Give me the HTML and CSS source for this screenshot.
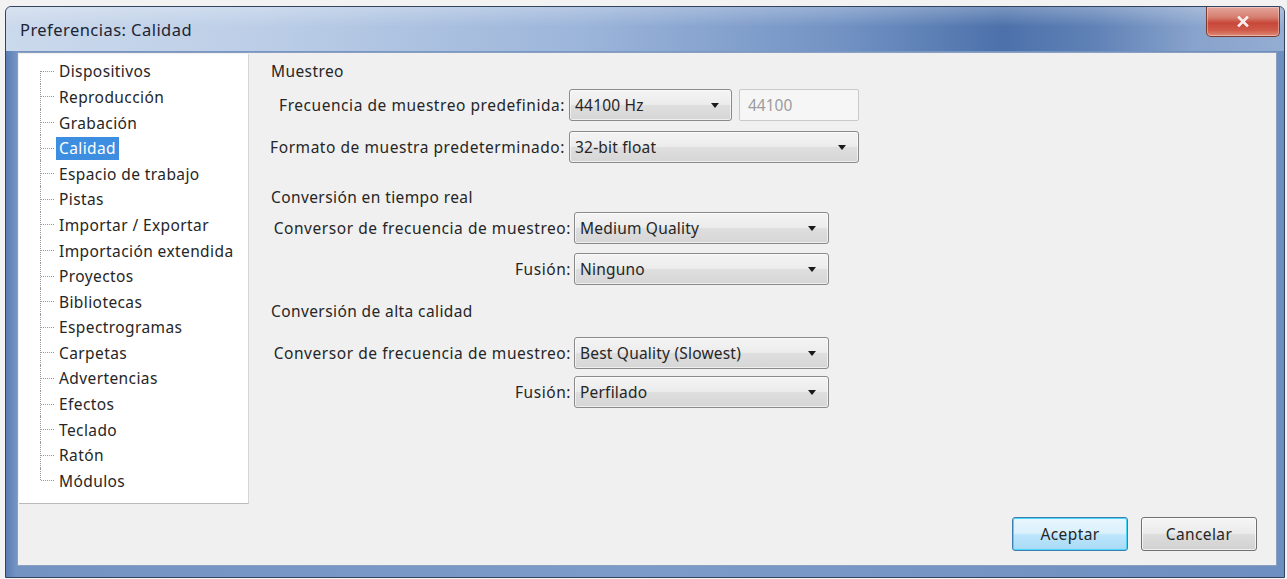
FILE: index.html
```html
<!DOCTYPE html>
<html lang="es">
<head>
<meta charset="utf-8">
<title>Preferencias: Calidad</title>
<link rel="stylesheet" href="styles.css">
</head>
<body>
<div class="window">
  <div class="titlebar">
    <span class="title">Preferencias: Calidad</span>
    <button class="close" type="button" aria-label="Cerrar">
      <svg width="12" height="11" viewBox="0 0 12 11"><path d="M2 1.5 L10 9.5 M10 1.5 L2 9.5" stroke="#fbeeee" stroke-width="2.6" stroke-linecap="square"/></svg>
    </button>
  </div>
  <div class="client">
    <div class="main">
      <ul class="tree">
        <li><span>Dispositivos</span></li>
        <li><span>Reproducción</span></li>
        <li><span>Grabación</span></li>
        <li class="selected"><span>Calidad</span></li>
        <li><span>Espacio de trabajo</span></li>
        <li><span>Pistas</span></li>
        <li><span>Importar / Exportar</span></li>
        <li><span>Importación extendida</span></li>
        <li><span>Proyectos</span></li>
        <li><span>Bibliotecas</span></li>
        <li><span>Espectrogramas</span></li>
        <li><span>Carpetas</span></li>
        <li><span>Advertencias</span></li>
        <li><span>Efectos</span></li>
        <li><span>Teclado</span></li>
        <li><span>Ratón</span></li>
        <li><span>Módulos</span></li>
      </ul>
      <div class="panel">
        <div class="heading h-sample">Muestreo</div>
        <div class="form form-sample">
          <label>Frecuencia de muestreo predefinida:</label>
          <div class="combo combo-rate"><span>44100 Hz</span><i class="arrow"></i></div>
          <div class="field">44100</div>
          <label>Formato de muestra predeterminado:</label>
          <div class="combo combo-wide"><span>32-bit float</span><i class="arrow"></i></div>
        </div>

        <div class="heading h-realtime">Conversión en tiempo real</div>
        <div class="form form-realtime">
          <label>Conversor de frecuencia de muestreo:</label>
          <div class="combo"><span>Medium Quality</span><i class="arrow"></i></div>
          <label>Fusión:</label>
          <div class="combo"><span>Ninguno</span><i class="arrow"></i></div>
        </div>

        <div class="heading h-high">Conversión de alta calidad</div>
        <div class="form form-high">
          <label>Conversor de frecuencia de muestreo:</label>
          <div class="combo"><span>Best Quality (Slowest)</span><i class="arrow"></i></div>
          <label>Fusión:</label>
          <div class="combo"><span>Perfilado</span><i class="arrow"></i></div>
        </div>
      </div>
    </div>
    <div class="buttons">
      <button class="btn default" type="button">Aceptar</button>
      <button class="btn" type="button">Cancelar</button>
    </div>
  </div>
</div>
</body>
</html>
```

FILE: styles.css
```css
* {
  box-sizing: border-box;
}

html, body {
  margin: 0;
  padding: 0;
}

body {
  width: 1287px;
  height: 579px;
  overflow: hidden;
  background: #f2f2f2;
  font-family: "Noto Sans", "Open Sans", sans-serif;
  font-size: 15.5px;
  letter-spacing: 0.4px;
  color: #262626;
}

/* Aero-style window frame */
.window {
  margin: 6px 0 0 5px;
  width: 1280px;
  height: 572px;
  display: flex;
  flex-direction: column;
  border: 1px solid #33445e;
  border-radius: 6px 6px 0 0;
  background:
    linear-gradient(to right, #5a7db4 0px, #7393c3 10px, #7d9bc8 50%, #6d8ec0 100%);
  padding: 0 7px 11px 11px;
}

.titlebar {
  height: 44px;
  margin: 0 -7px 0 -11px;
  padding-left: 14px;
  padding-right: 4px;
  display: flex;
  justify-content: space-between;
  align-items: flex-start;
  border-radius: 5px 5px 0 0;
  background:
    linear-gradient(to bottom, rgba(255,255,255,0.25) 0%, rgba(255,255,255,0) 45%),
    linear-gradient(to right, #cbd9ec 0%, #bccee7 20%, #9cb5da 45%, #7393c4 65%, #4c71aa 78%, #5f81b6 85%, #88a3cc 93%, #93acd2 100%);
}

.title {
  align-self: center;
  font-size: 16.5px;
  letter-spacing: 0.45px;
  color: #1c2433;
}

.close {
  width: 74px;
  height: 30px;
  margin: 0;
  padding: 0;
  border: 1px solid #7a3a30;
  border-top: none;
  border-radius: 0 0 5px 5px;
  background: linear-gradient(to bottom, #e3a59a 0%, #d57f70 35%, #c8483a 55%, #cf5a48 80%, #de8a78 100%);
  display: flex;
  align-items: center;
  justify-content: center;
  box-shadow: inset 0 0 0 1px rgba(255,255,255,0.35);
}

/* Client area */
.client {
  flex: 1;
  display: flex;
  flex-direction: column;
  background: #f0f0f0;
  border: 1px solid #8aa0be;
  margin-top: 1px;
}

.main {
  display: flex;
  padding: 1px 0 0 1px;
  height: 451px;
}

/* Category tree */
.tree {
  list-style: none;
  margin: 0;
  padding: 4px 0 0 0;
  width: 230px;
  height: 450px;
  background: #ffffff;
  border-right: 1px solid #d5d5d5;
  border-bottom: 1px solid #b9b9b9;
}

.tree li {
  position: relative;
  height: 25.6px;
  line-height: 25.6px;
  padding-left: 37px;
  white-space: nowrap;
}

.tree li::before {
  content: "";
  position: absolute;
  left: 21px;
  top: 0;
  height: 100%;
  border-left: 1px dotted #9a9a9a;
}

.tree li:first-child::before {
  top: 50%;
  height: 50%;
}

.tree li:last-child::before {
  height: 50%;
}

.tree li::after {
  content: "";
  position: absolute;
  left: 22px;
  top: 50%;
  width: 13px;
  border-top: 1px dotted #9a9a9a;
}

.tree li span {
  display: inline-block;
  padding: 0 3px;
  line-height: 23px;
  vertical-align: middle;
}

.tree li.selected span {
  background: #3d8ee0;
  color: #ffffff;
}

/* Settings panel */
.panel {
  flex: 1;
  padding: 7px 0 0 22px;
}

.heading {
  line-height: 20px;
}

.form {
  display: grid;
  align-items: center;
  justify-items: start;
}

.form label {
  justify-self: end;
  white-space: nowrap;
  letter-spacing: 0.55px;
}

.form-sample {
  grid-template-columns: 294px 163px 120px;
  margin-top: 8px;
  row-gap: 10px;
  column-gap: 4px;
}

.form-sample .field {
  margin-left: 3px;
}

.form-sample .combo-wide {
  grid-column: 2 / span 2;
  width: 290px;
}

.h-realtime {
  margin-top: 24px;
}

.form-realtime,
.form-high {
  grid-template-columns: 300px 255px;
  column-gap: 3px;
}

.form-realtime {
  margin-top: 5px;
  row-gap: 9px;
}

.h-high {
  margin-top: 16px;
}

.form-high {
  margin-top: 16px;
  row-gap: 7px;
}

/* Combo boxes */
.combo {
  width: 255px;
  height: 32px;
  display: flex;
  align-items: center;
  justify-content: space-between;
  padding: 0 12px 0 5px;
  border: 1px solid #8a8a8a;
  border-radius: 3px;
  background: linear-gradient(to bottom, #f4f4f4 0%, #ececec 48%, #dedede 52%, #d6d6d6 100%);
  box-shadow: inset 0 0 0 1px rgba(255,255,255,0.6);
  white-space: nowrap;
  letter-spacing: 0.2px;
}

.combo-rate {
  width: 163px;
}

.arrow {
  width: 0;
  height: 0;
  border-left: 4px solid transparent;
  border-right: 4px solid transparent;
  border-top: 5px solid #1a1a1a;
}

.field {
  width: 120px;
  height: 32px;
  display: flex;
  align-items: center;
  padding-left: 8px;
  border: 1px solid #c9c9c9;
  border-radius: 2px;
  background: #f6f6f6;
  color: #9c9c9c;
  letter-spacing: 0;
}

/* Dialog buttons */
.buttons {
  flex: 1;
  display: flex;
  justify-content: flex-end;
  align-items: flex-start;
  gap: 13px;
  padding: 13px 19px 0 0;
}

.btn {
  width: 116px;
  height: 34px;
  font-family: inherit;
  font-size: 15.5px;
  letter-spacing: 0.4px;
  color: #262626;
  border: 1px solid #707070;
  border-radius: 3px;
  background: linear-gradient(to bottom, #f5f5f5 0%, #ebebeb 48%, #dddddd 52%, #d1d1d1 100%);
  box-shadow: inset 0 0 0 1px rgba(255,255,255,0.7);
}

.btn.default {
  border-color: #3c7fb1;
  background: linear-gradient(to bottom, #eaf6fd 0%, #d9f0fc 48%, #bee6fd 52%, #a7d9f5 100%);
  box-shadow: inset 0 0 0 1px #48d6fb;
}
```
